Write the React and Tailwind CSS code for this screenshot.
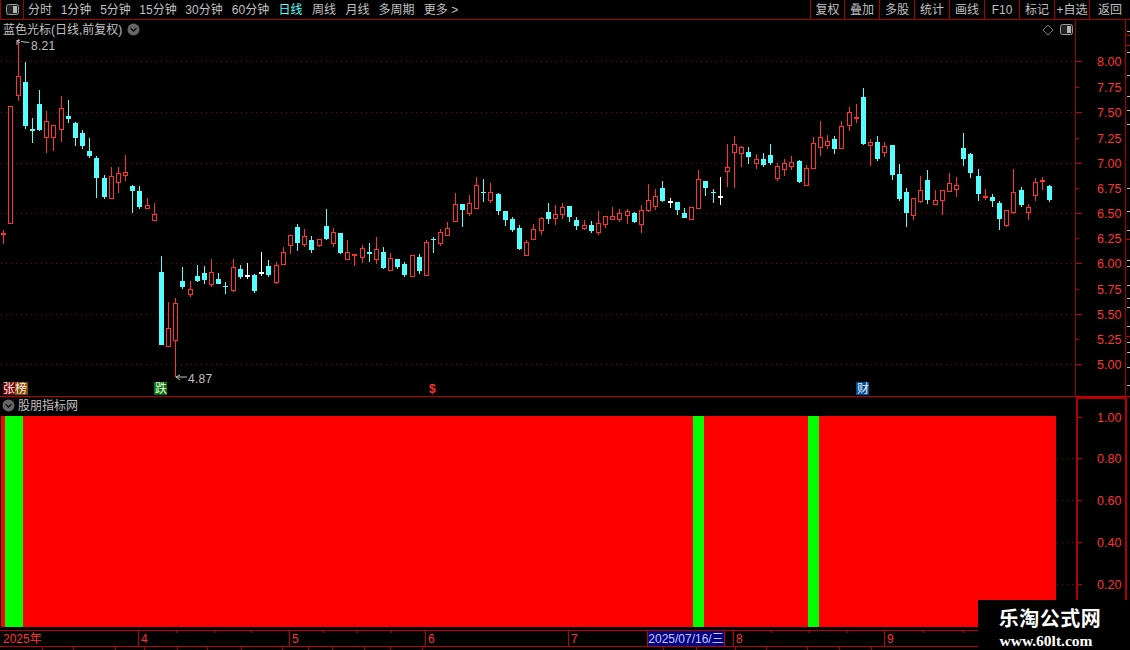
const periods = [
  ['分时', 32], ['1分钟', 40], ['5分钟', 39], ['15分钟', 46], ['30分钟', 46], ['60分钟', 47],
  ['日线', 33, true], ['周线', 34], ['月线', 33], ['多周期', 45], ['更多 >', 44],
];

const tools = [['复权', 34], ['叠加', 35], ['多股', 35], ['统计', 35], ['画线', 35], ['F10', 35], ['标记', 35], ['+自选', 35], ['返回', 41]];

// [type, high, bodyTop, bodyBottom, low] in page pixels
const candles = [
  ['r',230,233,234,244],['r',106,106,223,223],['r',39,76,95,101],['c',62,82,126,129],['c',118,129,131,143],['c',90,104,130,131],
  ['r',111,121,137,153],['r',125,125,137,151],['r',96,108,129,142],['c',100,116,119,123],['c',122,123,138,146],['c',130,133,146,149],
  ['c',138,151,156,158],['c',156,158,178,198],['c',175,178,197,199],['r',167,176,198,198],['r',167,173,182,193],['r',155,172,175,181],
  ['c',185,186,191,213],['c',186,191,207,209],['r',198,205,208,209],['r',203,214,220,220],['c',256,272,345,345],['r',302,328,346,346],
  ['r',298,303,340,377],['c',267,281,287,289],['r',281,289,294,297],['c',265,276,281,282],['c',266,273,280,284],['r',259,272,284,287],
  ['c',273,279,284,284],['c',282,286,287,294],['r',259,267,290,292],['c',265,269,277,279],['w',263,275,276,279],['c',274,275,291,293],
  ['w',252,272,273,276],['c',260,266,275,277],['r',262,265,282,284],['r',247,252,264,265],['r',235,235,245,254],['c',224,227,243,251],
  ['r',229,236,244,247],['c',236,240,250,253],['r',239,239,245,247],['c',209,226,239,240],['r',228,232,243,247],['c',233,233,253,254],
  ['r',240,252,259,259],['r',254,254,255,266],['r',245,248,257,263],['c',243,252,254,262],['r',237,249,259,264],['c',247,252,268,269],
  ['r',253,258,270,270],['c',259,259,267,269],['c',262,264,275,277],['r',255,255,276,276],['c',254,257,271,274],['r',240,242,275,276],
  ['c',237,239,240,253],['r',229,232,243,246],['r',222,228,235,235],['r',193,204,221,222],['c',204,204,210,227],['r',195,203,213,216],
  ['r',177,185,208,209],['c',179,192,193,202],['r',183,192,200,203],['c',193,194,211,215],['c',211,211,220,226],['c',217,219,230,232],
  ['c',225,228,249,250],['r',240,242,255,255],['r',224,229,239,240],['r',217,218,230,235],['c',203,212,219,224],['r',205,214,218,225],
  ['r',203,207,214,219],['c',206,206,217,222],['c',217,220,226,230],['r',220,225,228,230],['c',221,225,231,233],['r',211,223,232,235],
  ['r',216,216,224,228],['r',207,216,219,220],['r',209,213,219,222],['r',209,211,215,224],['c',212,213,222,223],['r',205,210,224,233],
  ['r',184,200,210,212],['r',189,196,206,210],['c',181,188,201,202],['w',198,201,202,208],['c',202,202,210,215],['c',208,213,218,218],
  ['r',207,207,219,219],['r',170,179,208,208],['c',181,181,188,196],['c',189,192,193,203],['w',177,196,197,205],['r',144,167,171,187],
  ['r',136,144,152,188],['r',146,147,153,167],['c',147,152,157,164],['r',154,159,163,169],['c',153,159,165,167],['c',144,155,163,165],
  ['r',163,166,178,181],['r',159,163,169,176],['r',156,162,166,170],['c',160,161,182,183],['r',165,168,185,186],['r',137,143,168,168],
  ['r',121,137,147,156],['r',135,141,145,149],['c',136,139,149,154],['r',121,126,148,149],['r',107,112,125,131],['r',104,117,118,123],
  ['c',88,97,144,145],['r',139,142,145,166],['c',136,142,159,161],['r',142,146,152,157],['c',145,145,175,180],['c',164,174,199,201],
  ['c',188,192,213,227],['r',198,198,215,220],['r',176,190,201,203],['c',170,180,200,204],['r',190,200,204,204],['r',190,190,200,215],
  ['r',173,183,191,191],['r',177,185,189,197],['c',133,148,159,166],['c',153,154,173,178],['c',169,176,194,201],['r',189,196,197,200],
  ['c',194,197,201,207],['c',201,203,219,230],['r',210,210,225,227],['r',169,192,212,214],['c',187,190,205,207],['r',204,207,212,220],
  ['r',178,182,195,201],['r',177,180,181,190],['c',185,186,200,202],
];

const colors = { r: '#ff3232', c: '#54ffff', w: '#ffffff' };

const priceTicks = [
  [61, '8.00', true], [87, '7.75'], [112, '7.50', true], [138, '7.25'], [163, '7.00', true], [188, '6.75'], [213, '6.50', true],
  [238, '6.25'], [263, '6.00', true], [289, '5.75'], [314, '5.50', true], [339, '5.25'], [364, '5.00', true],
];

const indicatorTicks = [[417, '1.00'], [458, '0.80'], [500, '0.60'], [542, '0.40'], [584, '0.20']];

const stripWhite = [31, 52, 75, 96, 110, 124, 188, 211, 230, 260, 266, 285, 298, 307, 326, 342, 352, 367, 385];
const stripRed = [35, 45, 239, 336];

const bars = [
  ['bg-[#ff0000]', 4], ['bg-[#00ff00]', 18], ['bg-[#ff0000]', 670], ['bg-[#00ff00]', 11],
  ['bg-[#ff0000]', 104], ['bg-[#00ff00]', 11], ['bg-[#ff0000]', 237],
];

const dateCells = [
  ['2025年', 138], ['4', 151], ['5', 136], ['6', 143], ['7', 79],
];

const dateTicks = [176, 214, 251, 323, 357, 391, 771, 809, 846, 923, 963];
const footerLines = [42, 73, 115, 144, 177, 207, 241, 282, 308, 332, 364, 390, 422, 663, 696, 735, 766, 807, 839, 871];

const PanelIcon = ({ className }) => (
  <svg className={className} width="13" height="11" viewBox="0 0 13 11">
    <rect x="0.5" y="0.5" width="12" height="10" rx="2" fill="#222" stroke="#9a9a9a" />
    <rect x="7" y="2" width="4" height="7" fill="#b4b4b4" />
  </svg>
);

const ChevronDot = () => (
  <svg width="13" height="13" viewBox="0 0 13 13">
    <circle cx="6.5" cy="6.5" r="6" fill="#666" />
    <path d="M3.5 5.2 L6.5 8 L9.5 5.2" fill="none" stroke="#111" strokeWidth="1.4" />
  </svg>
);

const Candle = ({ c, i }) => {
  const [type, high, top, bottom, low] = c;
  const x = Math.round(3.3 + 7.164 * i);
  const color = colors[type];
  return (
    <g>
      <rect x={x} y={high} width="1" height={low - high} fill={color} />
      {type === 'r' && bottom - top > 2 ? (
        <rect x={x - 1.5} y={top + 0.5} width="4" height={bottom - top} fill="#000" stroke={color} />
      ) : (
        <rect x={x - 2} y={top} width="5" height={Math.max(bottom - top, 1) + (type === 'c' ? 0 : 1)} fill={color} />
      )}
    </g>
  );
};

const PriceChart = () => (
  <svg className="block" width="1130" height="376" viewBox="0 20 1130 376" shapeRendering="crispEdges">
    {priceTicks.filter((t) => t[2]).map(([y]) => (
      <line key={y} x1="1" x2="1075" y1={y + 0.5} y2={y + 0.5} stroke="#8c0000" strokeDasharray="1 4" />
    ))}
    {candles.map((c, i) => <Candle key={i} c={c} i={i} />)}

    <rect x="1075" y="20" width="1" height="376" fill="#a00000" />
    <rect x="1125" y="20" width="1" height="376" fill="#a00000" />
    {priceTicks.map(([y, label, major]) => (
      <g key={label}>
        <rect x="1075" y={y} width={major ? 7 : 4} height="1" fill="#c00000" />
        <text x="1097" y={y + 5} fontSize="12.5" fill="#ff3232" shapeRendering="auto">{label}</text>
      </g>
    ))}
    {stripWhite.map((y) => <rect key={y} x="1127" y={y} width="3" height="1" fill="#c0c0c0" />)}
    {stripRed.map((y) => <rect key={y} x="1126" y={y} width="4" height="1" fill="#c00000" />)}

    <path d="M17 40 V45 M17 41 L20 40 M17 41 L20 43 M21 41.5 L29 42.5" stroke="#c0c0c0" fill="none" shapeRendering="auto" />
    <text x="31" y="50" fontSize="12" letterSpacing="0.3" fill="#c0c0c0">8.21</text>
    <path d="M176 377 H187 M176 377 L180 375 M176 377 L180 380" stroke="#c0c0c0" fill="none" shapeRendering="auto" />
    <text x="188" y="383" fontSize="12" letterSpacing="0.3" fill="#c0c0c0">4.87</text>

    <g fontSize="12" shapeRendering="auto">
      <rect x="3" y="382" width="12" height="13" fill="#800000" />
      <rect x="15" y="382" width="13" height="13" fill="#8a4800" />
      <text x="3" y="393" fill="#f0f0f0">张</text>
      <text x="15" y="393" fill="#f0f0f0">榜</text>
      <rect x="154" y="382" width="13" height="13" fill="#007800" />
      <text x="155" y="393" fill="#f0f0f0">跌</text>
      <text x="429" y="393" fill="#ff3232" fontWeight="700">$</text>
      <rect x="856" y="382" width="13" height="13" fill="#004f9e" />
      <text x="857" y="393" fill="#f0f0f0">财</text>
    </g>
  </svg>
);

const App = () => (
  <div className="relative w-[1130px] h-[650px] overflow-hidden bg-black text-[12px] leading-none text-[#c0c0c0] font-['Liberation_Sans','Noto_Sans_CJK_SC',sans-serif] flex flex-col">
    {/* toolbar */}
    <div className="h-[20px] shrink-0 flex border-b border-[#a00000]">
      <div className="w-[24px] flex items-center justify-center border-x border-[#a00000]">
        <PanelIcon />
      </div>
      {periods.map(([label, w, active]) => (
        <div key={label} style={{ width: w }} className={`flex items-center justify-center ${active ? 'text-[#54ffff]' : ''}`}>
          {label}
        </div>
      ))}
      <div className="ml-auto flex">
        {tools.map(([label, w]) => (
          <div key={label} style={{ width: w }} className="flex items-center justify-center border-l border-[#a00000]">
            {label}
          </div>
        ))}
      </div>
    </div>

    {/* price panel */}
    <div className="relative h-[376px] shrink-0">
      <PriceChart />
      <div className="absolute left-[3px] top-[3px] flex items-center gap-[5px]">
        <span className="whitespace-nowrap">蓝色光标(日线,前复权)</span>
        <ChevronDot />
      </div>
      <svg className="absolute left-[1042px] top-[4px]" width="12" height="12" viewBox="0 0 12 12">
        <path d="M6 1 L11 6 L6 11 L1 6 Z" fill="none" stroke="#777" />
      </svg>
      <PanelIcon className="absolute left-[1060px] top-[4px]" />
    </div>

    {/* indicator panel */}
    <div className="h-[234px] shrink-0 flex border-t border-[#c00000]">
      <div className="w-[1076px] flex flex-col">
        <div className="h-[19px] flex items-center gap-[3px] pl-[2px] pb-[2px]">
          <ChevronDot />
          <span>股朋指标网</span>
        </div>
        <div className="h-[211px] flex pl-[1px]">
          {bars.map(([color, w], i) => (
            <div key={i} style={{ width: w }} className={color} />
          ))}
          <svg className="flex-1" height="211" viewBox="1056 416 20 211" shapeRendering="crispEdges">
            {indicatorTicks.slice(1).map(([y]) => (
              <line key={y} x1="1057" x2="1076" y1={y + 0.5} y2={y + 0.5} stroke="#8c0000" strokeDasharray="1 4" />
            ))}
          </svg>
        </div>
      </div>
      <div className="w-[51px] border-x-2 border-t-2 border-[#b00000]">
        <svg className="block" width="47" height="231" viewBox="1078 399 47 231" shapeRendering="crispEdges">
          {indicatorTicks.map(([y, label]) => (
            <g key={label}>
              <rect x="1078" y={y} width="4" height="1" fill="#c00000" />
              <text x="1097" y={y + 5} fontSize="12.5" fill="#ff3232" shapeRendering="auto">{label}</text>
            </g>
          ))}
        </svg>
      </div>
    </div>

    {/* date strip */}
    <div className="relative h-[17px] shrink-0 flex border-y border-[#c00000] text-[#ff3232]">
      {dateCells.map(([label, w], i) => (
        <div key={label} style={{ width: w }} className={`flex items-center ${i > 0 ? 'pl-[2px] border-l border-[#c00000]' : 'pl-[3px]'}`}>
          {label}
        </div>
      ))}
      <div className="w-[78px] flex items-center justify-center bg-[#000080] text-[#c8c8ff] border-x border-[#c00000]">
        2025/07/16/三
      </div>
      <div className="w-[8px]" />
      <div className="w-[151px] flex items-center pl-[2px] border-l border-[#c00000]">8</div>
      <div className="flex-1 flex items-center pl-[2px] border-l border-[#c00000]">9</div>
      {dateTicks.map((x) => (
        <i key={x} style={{ left: x }} className="absolute top-0 w-px h-[2px] bg-[#c00000]" />
      ))}
    </div>

    {/* status row, only its top shows at the window edge */}
    <div className="relative flex-1 overflow-hidden">
      {footerLines.map((x) => (
        <i key={x} style={{ left: x }} className="absolute top-0 bottom-0 w-px bg-[#a00000]" />
      ))}
    </div>

    {/* site stamp */}
    <div className="absolute right-0 bottom-0 w-[152px] h-[50px] bg-black text-white font-bold flex flex-col items-center pt-[9px] pr-[8px] gap-[6px] font-['Liberation_Serif','Noto_Sans_CJK_SC',serif]">
      <span className="text-[20px] leading-[20px] tracking-[0.5px]">乐淘公式网</span>
      <span className="text-[15.5px] leading-[12px] mr-[8px]">www.60lt.com</span>
    </div>
  </div>
);

export default App;
